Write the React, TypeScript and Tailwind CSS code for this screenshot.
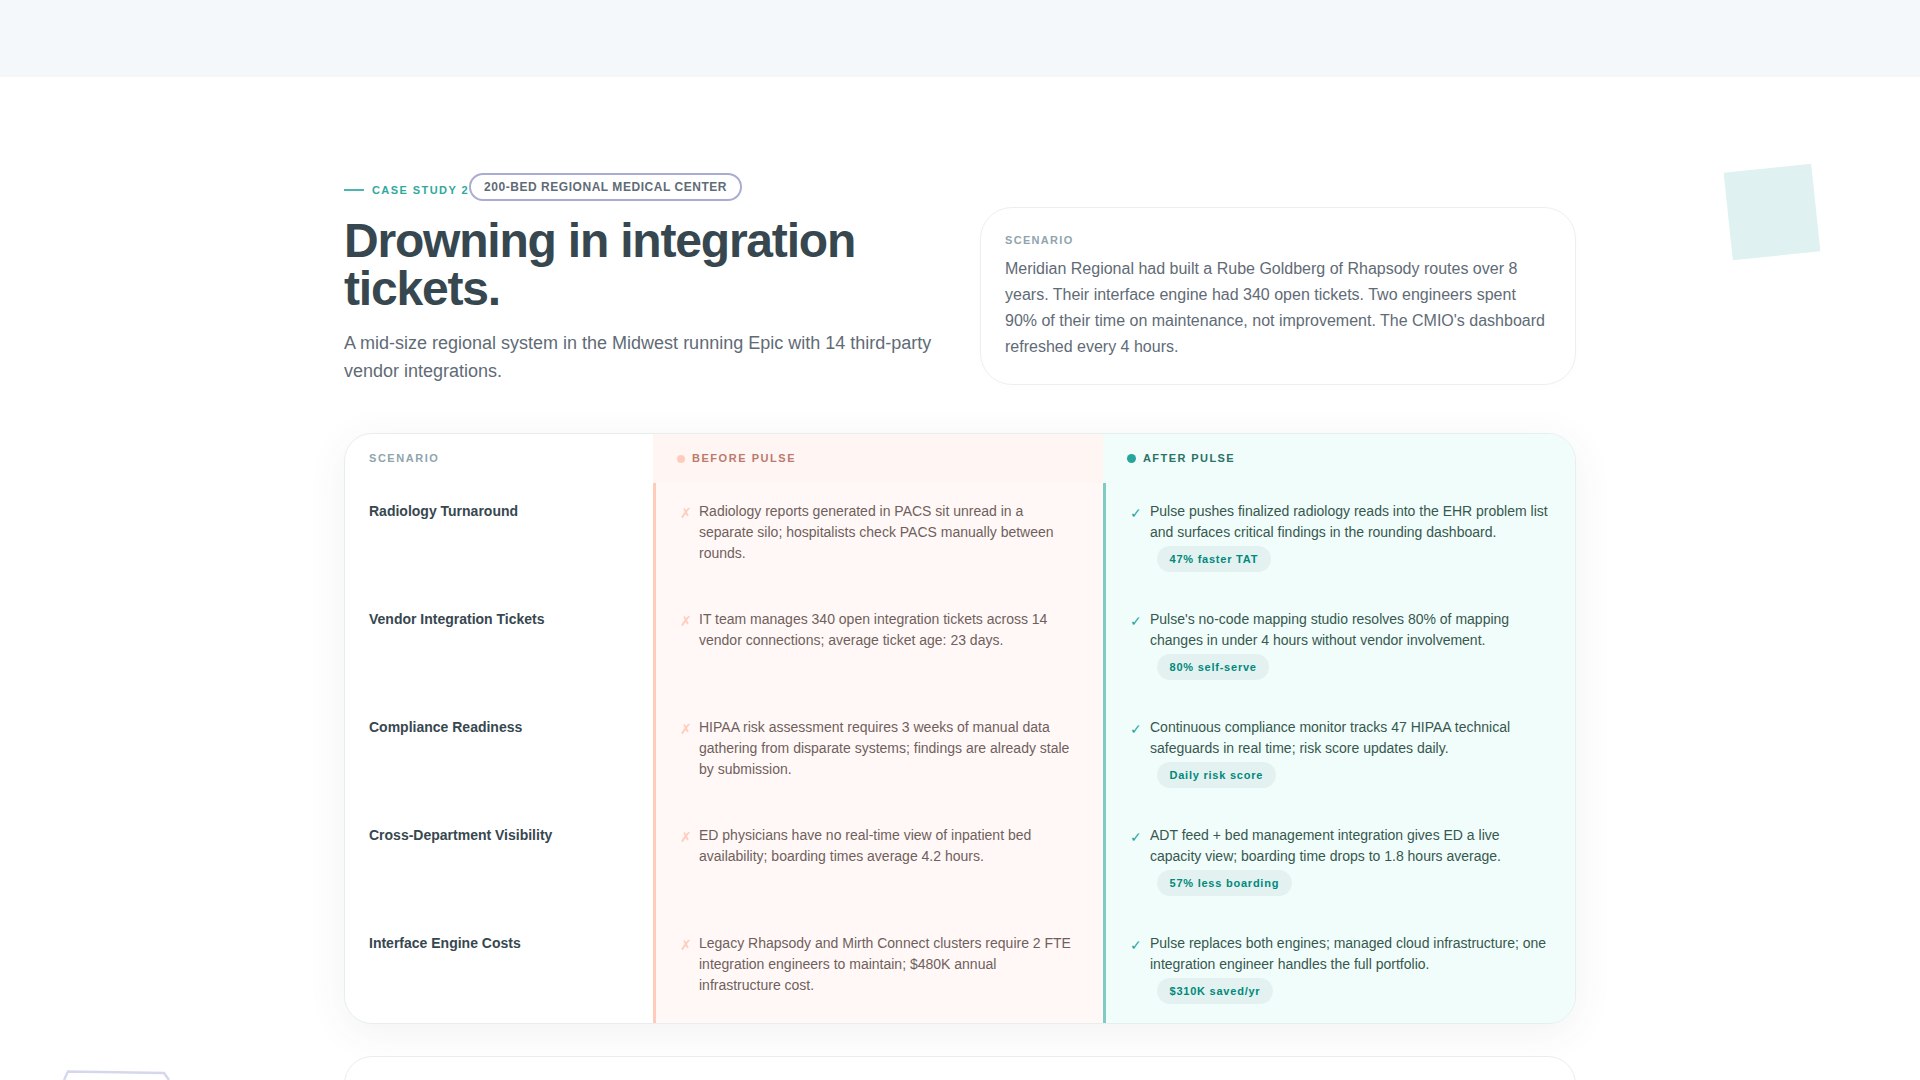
const rows = [
  {
    name: "Radiology Turnaround",
    before: "Radiology reports generated in PACS sit unread in a separate silo; hospitalists check PACS manually between rounds.",
    after: "Pulse pushes finalized radiology reads into the EHR problem list and surfaces critical findings in the rounding dashboard.",
    tag: "47% faster TAT",
  },
  {
    name: "Vendor Integration Tickets",
    before: "IT team manages 340 open integration tickets across 14 vendor connections; average ticket age: 23 days.",
    after: "Pulse's no-code mapping studio resolves 80% of mapping changes in under 4 hours without vendor involvement.",
    tag: "80% self-serve",
  },
  {
    name: "Compliance Readiness",
    before: "HIPAA risk assessment requires 3 weeks of manual data gathering from disparate systems; findings are already stale by submission.",
    after: "Continuous compliance monitor tracks 47 HIPAA technical safeguards in real time; risk score updates daily.",
    tag: "Daily risk score",
  },
  {
    name: "Cross-Department Visibility",
    before: "ED physicians have no real-time view of inpatient bed availability; boarding times average 4.2 hours.",
    after: "ADT feed + bed management integration gives ED a live capacity view; boarding time drops to 1.8 hours average.",
    tag: "57% less boarding",
  },
  {
    name: "Interface Engine Costs",
    before: "Legacy Rhapsody and Mirth Connect clusters require 2 FTE integration engineers to maintain; $480K annual infrastructure cost.",
    after: "Pulse replaces both engines; managed cloud infrastructure; one integration engineer handles the full portfolio.",
    tag: "$310K saved/yr",
  },
];

export default function App() {
  return (
    <div className="relative h-screen overflow-hidden bg-white font-['Liberation_Sans',Arial,sans-serif] text-[#37474f]">
      <div className="h-[77px] bg-[#f4f8fa]" />

      <div className="absolute left-[1728px] top-[168px] h-[88px] w-[88px] -rotate-6 bg-[#dff1f0]" />
      <svg className="absolute left-[63px] top-[1068px]" width="114" height="12" viewBox="0 0 114 12" fill="none">
        <path d="M1 12 L5 3.5 L101 5 L106 12" stroke="#d5d8ec" strokeWidth="2.4" />
      </svg>

      <main className="mx-auto mt-[96px] w-[1232px]">
        <div className="flex gap-[40px]">
          <div className="w-[596px] shrink-0">
            <div className="flex items-start">
              <div className="mt-[7px] flex items-center gap-[8px]">
                <span className="h-[1.5px] w-[20px] bg-[#4db6ac]" />
                <span className="text-[11px] leading-[20px] font-bold tracking-[0.13em] text-[#2fa99c]">CASE STUDY 2</span>
              </div>
              <span className="rounded-full border-2 border-[#a9adcf] px-[13px] text-[12px] leading-[24px] font-bold tracking-[0.045em] text-[#5f6b76]">
                200-BED REGIONAL MEDICAL CENTER
              </span>
            </div>
            <h1 className="mt-[16px] text-[48px] leading-[48px] font-bold tracking-[-0.025em] text-[#37474f]">
              Drowning in integration tickets.
            </h1>
            <p className="mt-[16px] text-[18px] leading-[28px] text-[#5f6b76]">
              A mid-size regional system in the Midwest running Epic with 14 third-party vendor integrations.
            </p>
          </div>
          <div className="mt-[34px] h-[178px] w-[596px] rounded-[32px] border border-[#eceff1] bg-white px-[24px] pt-[23px] shadow-[0_2px_12px_rgba(0,0,0,0.01)]">
            <div className="text-[11px] leading-[18px] font-bold tracking-[0.12em] text-[#90a4ae]">SCENARIO</div>
            <p className="mt-[7px] text-[16px] leading-[26px] text-[#5f6b76]">
              Meridian Regional had built a Rube Goldberg of Rhapsody routes over 8 years. Their interface engine had 340 open tickets. Two engineers spent 90% of their time on maintenance, not improvement. The CMIO's dashboard refreshed every 4 hours.
            </p>
          </div>
        </div>

        <div className="mt-[48px] h-[591px] overflow-hidden rounded-[28px] border border-[#e8edf0] bg-white shadow-[0_8px_40px_rgba(55,71,79,0.07)]">
          <div className="grid grid-cols-[308px_450px_1fr]">
            <div className="flex h-[49px] items-center px-[24px] text-[11px] font-bold tracking-[0.14em] text-[#90a4ae]">SCENARIO</div>
            <div className="flex h-[49px] items-center gap-[7px] bg-[#fff6f4] px-[24px] text-[11px] font-bold tracking-[0.14em] text-[#bc7a6e]">
              <span className="size-[8px] rounded-full bg-[#ffccbc]" />
              BEFORE PULSE
            </div>
            <div className="flex h-[49px] items-center gap-[7px] bg-[#f0fdfa] px-[24px] text-[11px] font-bold tracking-[0.13em] text-[#2b7268]">
              <span className="size-[9px] rounded-full bg-[#26a69a]" />
              AFTER PULSE
            </div>
          </div>
          {rows.map((r) => (
            <div key={r.name} className="grid h-[108px] grid-cols-[308px_450px_1fr]">
              <div className="px-[24px] pt-[18px] text-[14px] leading-[21px] font-bold text-[#37474f]">{r.name}</div>
              <div className="flex gap-[7px] border-l-[3px] border-[#ffccbc] bg-[#fff8f6] pr-[25px] pl-[24px] pt-[18px] text-[14px] leading-[21px] text-[#6f5f5d]">
                <span className="mt-[2px] w-[12px] shrink-0 text-[14px] text-[#ffccbc]">✗</span>
                <p>{r.before}</p>
              </div>
              <div className="flex gap-[8px] border-l-[3px] border-[#80cbc4] bg-[#f0fdfa] pr-[24px] pl-[24px] pt-[18px] text-[14px] leading-[21px] text-[#37574f]">
                <span className="mt-[2px] w-[12px] shrink-0 text-[14px] text-[#26a69a]">✓</span>
                <div>
                  <p>{r.after}</p>
                  <span className="mt-[3px] ml-[7px] inline-block rounded-full bg-[#e3f2f1] px-[12.5px] text-[11px] leading-[26px] font-bold tracking-[0.07em] text-[#00897b]">
                    {r.tag}
                  </span>
                </div>
              </div>
            </div>
          ))}
        </div>

        <div className="mt-[32px] h-[200px] rounded-[28px] border border-[#e8edf0] bg-white" />
      </main>
    </div>
  );
}
